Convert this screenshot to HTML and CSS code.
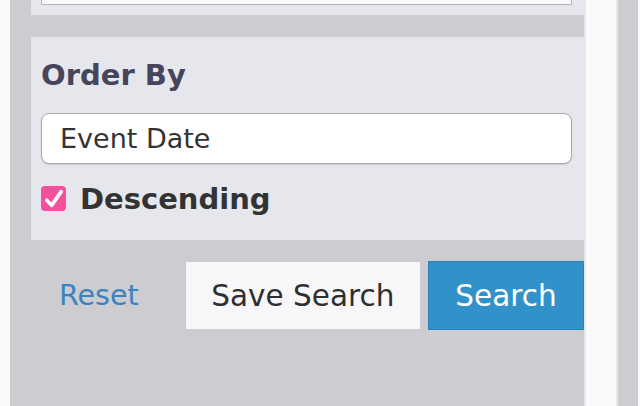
FILE: index.html
```html
<!DOCTYPE html>
<html>
<head>
<meta charset="utf-8">
<link rel="stylesheet" href="styles.css">
</head>
<body>
<div class="page">
  <div class="gutter"></div>
  <div class="column">
    <div class="section top-section">
      <div class="input-stub"></div>
    </div>
    <div class="section order-section">
      <h2 class="heading">Order By</h2>
      <div class="select">Event Date</div>
      <label class="check-row">
        <span class="checkbox">
          <svg width="25" height="25" viewBox="0 0 25 25"><path d="M5.8 14.2 L10.6 19.4 L20.2 5.6" fill="none" stroke="#fff" stroke-width="3.6" stroke-linecap="round" stroke-linejoin="round"/></svg>
        </span>
        <span class="check-label">Descending</span>
      </label>
    </div>
    <div class="actions">
      <a class="reset">Reset</a>
      <button class="btn btn-save">Save Search</button>
      <button class="btn btn-search">Search</button>
    </div>
  </div>
  <div class="side-line"></div>
  <div class="side-white"></div>
  <div class="side-line"></div>
  <div class="side-gray"></div>
</div>
</body>
</html>
```
FILE: styles.css
```css
html, body {
  margin: 0;
  padding: 0;
  background: #fafafa;
  overflow: hidden;
}
.page {
  display: flex;
  height: 406px;
  font-family: "DejaVu Sans", Verdana, sans-serif;
}
.gutter {
  width: 10px;
  flex: none;
}
.column {
  width: 574px;
  flex: none;
  background: #cdccd1;
  overflow: hidden;
}
.section {
  margin-left: 21px;
  background: #e6e7ec;
  padding: 0 12px 0 10px;
  box-sizing: border-box;
}
.top-section {
  height: 15px;
}
.input-stub {
  height: 4px;
  background: #fafafa;
  border: 1px solid #b4b4b8;
  border-top: none;
}
.order-section {
  margin-top: 22px;
  height: 203px;
  padding-top: 22px;
}
.heading {
  margin: 0;
  font-size: 29px;
  line-height: 32px;
  font-weight: bold;
  color: #46455b;
}
.select {
  margin-top: 22px;
  height: 51px;
  box-sizing: border-box;
  border: 1px solid #a8a8ad;
  border-radius: 8px;
  background: #fff;
  box-shadow: 0 1px 1px rgba(0,0,0,0.12);
  padding-left: 18px;
  font-size: 27px;
  line-height: 49px;
  color: #333;
}
.check-row {
  display: flex;
  align-items: center;
  margin-top: 18px;
}
.checkbox {
  width: 25px;
  height: 25px;
  border-radius: 4px;
  background: #f54f9d;
  flex: none;
  display: block;
}
.checkbox svg {
  display: block;
}
.check-label {
  margin-left: 14px;
  font-size: 29px;
  font-weight: bold;
  color: #333;
  line-height: 32px;
  position: relative;
  top: 1px;
}
.actions {
  display: flex;
  align-items: center;
  margin-top: 21px;
  margin-left: 21px;
  height: 69px;
}
.reset {
  margin-left: 28px;
  width: 80px;
  font-size: 28.5px;
  color: #3a83c3;
  white-space: nowrap;
}
.btn {
  font-family: "DejaVu Sans", Verdana, sans-serif;
  font-size: 29.5px;
  padding: 0;
  text-align: center;
  white-space: nowrap;
}
.btn-save {
  margin-left: 47px;
  width: 235px;
  height: 67px;
  background: #f7f7f9;
  border: none;
  color: #2f2f2f;
}
.btn-search {
  margin-left: 8px;
  width: 156px;
  flex: none;
  height: 69px;
  background: #3192c9;
  border: 1px solid #2a83b9;
  color: #fff;
}
.side-line {
  width: 2px;
  flex: none;
  background: #e7e7ea;
}
.side-white {
  width: 30px;
  flex: none;
  background: #fafafa;
}
.side-gray {
  width: 20px;
  flex: none;
  background: #cdccd1;
}
```
